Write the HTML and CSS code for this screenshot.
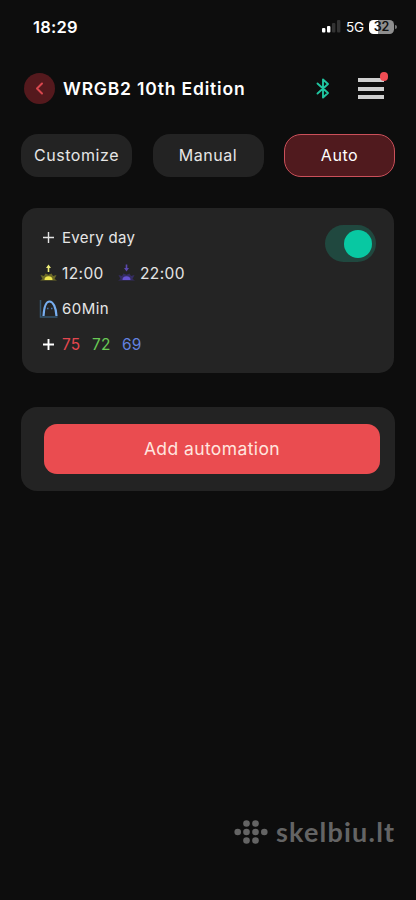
FILE: index.html
```html
<!DOCTYPE html>
<html lang="en">
<head>
<meta charset="utf-8">
<title>WRGB2 10th Edition</title>
<link rel="stylesheet" href="styles.css">
</head>
<body>
<div class="status">
  <span class="time">18:29</span>
  <svg class="signal" width="19" height="13" viewBox="0 0 19 13"><g fill="#fff"><rect x="0" y="8" width="3.4" height="4.5" rx="1"/><rect x="5" y="6" width="3.4" height="6.5" rx="1"/></g><g fill="#333"><rect x="10" y="3" width="3.4" height="9.5" rx="1"/><rect x="15" y="0" width="3.4" height="12.5" rx="1"/></g></svg>
  <span class="net">5G</span>
  <span class="battery">32</span>
  <span class="nub"></span>
</div>
<header class="header">
  <span class="back"><svg width="31" height="31" viewBox="0 0 31 31"><path d="M18 10.500l-5 5 5 5" fill="none" stroke="#d9474e" stroke-width="2" stroke-linecap="round" stroke-linejoin="round"/></svg></span>
  <h1 class="title">WRGB2 10th Edition</h1>
  <svg class="bt" width="14" height="21" viewBox="0 0 14 21"><path d="M1.500 5.500l10.500 9.500-5 4.500v-18l5 4.500-10.500 9.500" fill="none" stroke="#20c5a0" stroke-width="1.900" stroke-linejoin="round" stroke-linecap="round"/></svg>
  <span class="menu"><i></i><i></i><i></i><b class="dot"></b></span>
</header>
<nav class="tabs">
  <span class="tab">Customize</span>
  <span class="tab">Manual</span>
  <span class="tab active">Auto</span>
</nav>
<section class="card">
  <div class="rows">
    <div class="row"><svg class="icon" width="20" height="20" viewBox="0 0 20 20"><path d="M4 9.500h11M9.500 4v11" stroke="#e4e4e4" stroke-width="1.400"/></svg><span class="day">Every day</span></div>
    <div class="row">
      <svg class="icon" width="20" height="20" viewBox="0 0 20 20"><path d="M1 17.500l2.500-1.500-2-4 3.500 1 1.500-2.500 3 1.200 3-1.200 1.500 2.500 3.500-1-2 4 2.500 1.500z" fill="#6c6a28"/><path d="M5.500 17a4 3.700 0 0 1 8 0z" fill="#f2e84e"/><path d="M9.500 1.500l2.500 3.500h-1.700v4h-1.600v-4h-1.700z" fill="#eeed7a"/></svg><span class="t1">12:00</span>
      <svg class="icon" width="20" height="20" viewBox="0 0 20 20"><path d="M1 17.500l2.500-1.500-2-4 3.500 1 1.500-2.500 3 1.200 3-1.200 1.500 2.500 3.500-1-2 4 2.500 1.500z" fill="#352d62"/><path d="M5.500 17a4 3.700 0 0 1 8 0z" fill="#6753d2"/><path d="M9.500 8.500l2.500-3.500h-1.700v-3.500h-1.600v3.500h-1.700z" fill="#5b48ae"/></svg><span class="t2">22:00</span>
    </div>
    <div class="row"><svg class="icon" width="20" height="20" viewBox="0 0 20 20"><path d="M1.500 1v17h17" fill="none" stroke="#35566f" stroke-width="1.500"/><path d="M4.500 17c.5-8 2.300-14.500 6-14.500s6.500 6 7 14.500" fill="none" stroke="#77aef0" stroke-width="2.200"/><path d="M8 9.500h1.500m2.500 0h1.500" fill="none" stroke="#4474b4" stroke-width="1.500"/></svg><span class="min">60Min</span></div>
    <div class="row"><svg class="icon" width="20" height="20" viewBox="0 0 20 20"><path d="M4 9.500h11M9.500 4v11" stroke="#fff" stroke-width="1.900"/></svg><span class="num red">75</span><span class="num green">72</span><span class="num blue">69</span></div>
  </div>
  <span class="toggle"><i class="knob"></i></span>
</section>
<section class="panel"><div class="add">Add automation</div></section>
<div class="mark">
  <svg width="34" height="26" viewBox="0 0 34 26"><g fill="#646464"><circle cx="12.500" cy="4.500" r="3.300"/><circle cx="21.500" cy="4.500" r="3.300"/><circle cx="3.700" cy="13" r="3.300"/><circle cx="12.500" cy="13" r="3.300"/><circle cx="21.500" cy="13" r="3.300"/><circle cx="30.300" cy="13" r="3.300"/><circle cx="12.500" cy="21.500" r="3.300"/><circle cx="21.500" cy="21.500" r="3.300"/></g></svg>
  <span>skelbiu.lt</span>
</div>
</body>
</html>
```

FILE: styles.css
```css
* { box-sizing: border-box; }
body { margin: 0; height: 900px; overflow: hidden; background: #0d0d0d; color: #e6e6e6; font-family: Inter, sans-serif; position: relative; }
.status { display: flex; align-items: center; height: 53px; padding-left: 33px; color: #fff; }
.time { width: 289px; font-size: 16.500px; font-weight: 600; letter-spacing: .2px; }
.signal { width: 19px; }
.net { width: 24px; padding-left: 5px; font-size: 13.500px; font-weight: 400; letter-spacing: -.3px; margin-right: 4px; }
.battery { width: 25px; height: 14px; border-radius: 4.500px; background: linear-gradient(90deg, #fff 34%, #8e8e8e 34%); color: #111; font-size: 12.500px; font-weight: 600; line-height: 14px; text-align: center; }
.nub { width: 2px; height: 4px; margin-left: 1px; border-radius: 0 2px 2px 0; background: #777; }
.header { display: flex; align-items: center; height: 71px; padding-left: 24px; }
.back { width: 31px; height: 31px; border-radius: 50%; background: #54191d; }
.back svg { display: block; }
.title { width: 252px; margin: 0 0 0 8px; font-size: 17.500px; line-height: 22px; font-weight: 600; letter-spacing: .8px; color: #fff; white-space: nowrap; }
.bt { width: 14px; margin-left: 1px; }
.menu { position: relative; display: flex; flex-direction: column; gap: 4.500px; width: 26px; margin-left: 28px; }
.menu i { height: 4px; background: #cfcfcf; }
.dot { position: absolute; right: -4px; top: -6px; width: 8.500px; height: 8.500px; border-radius: 50%; background: #f04c53; }
.tabs { display: grid; grid-template-columns: repeat(3, 111px); justify-content: space-between; margin: 10px 21px 0; }
.tab { height: 43px; border-radius: 17px; background: #232323; font-size: 16px; line-height: 42px; letter-spacing: .55px; text-align: center; }
.tab.active { border: 1.500px solid #cb505a; background: #501a1e; line-height: 40px; color: #fff; }
.card { display: flex; justify-content: space-between; width: 372px; height: 165px; margin: 31px 0 0 22px; padding: 12px 18px 0 17px; border-radius: 15px; background: #242424; }
.row { display: flex; align-items: center; height: 35.600px; font-size: 15.500px; letter-spacing: .4px; }
.icon { flex: none; width: 20px; margin-right: 3px; }
.day { font-size: 15px; letter-spacing: .35px; }
.min { font-size: 15px; letter-spacing: .45px; }
.t1 { width: 55px; }
.num { width: 30px; letter-spacing: .2px; }
.red { color: #e3474f; }
.green { color: #69c955; }
.blue { color: #6381df; }
.toggle { display: flex; align-items: center; justify-content: flex-end; width: 51px; height: 37px; margin-top: 5px; padding-right: 4px; border-radius: 19px; background: #20483f; }
.knob { width: 28px; height: 28px; border-radius: 50%; background: #08c8a2; }
.panel { width: 374px; height: 84px; margin: 34px 0 0 21px; padding: 17px 15px 0 23px; border-radius: 16px; background: #232323; }
.add { height: 50px; border-radius: 13px; background: #ea4c50; color: #ffe5df; font-size: 17.500px; line-height: 50px; letter-spacing: .4px; text-align: center; }
.mark { position: absolute; left: 234px; top: 818px; display: flex; align-items: center; gap: 8px; height: 28px; color: #646464; font: 700 27px/28px Lato, sans-serif; letter-spacing: 1.2px; }
```
